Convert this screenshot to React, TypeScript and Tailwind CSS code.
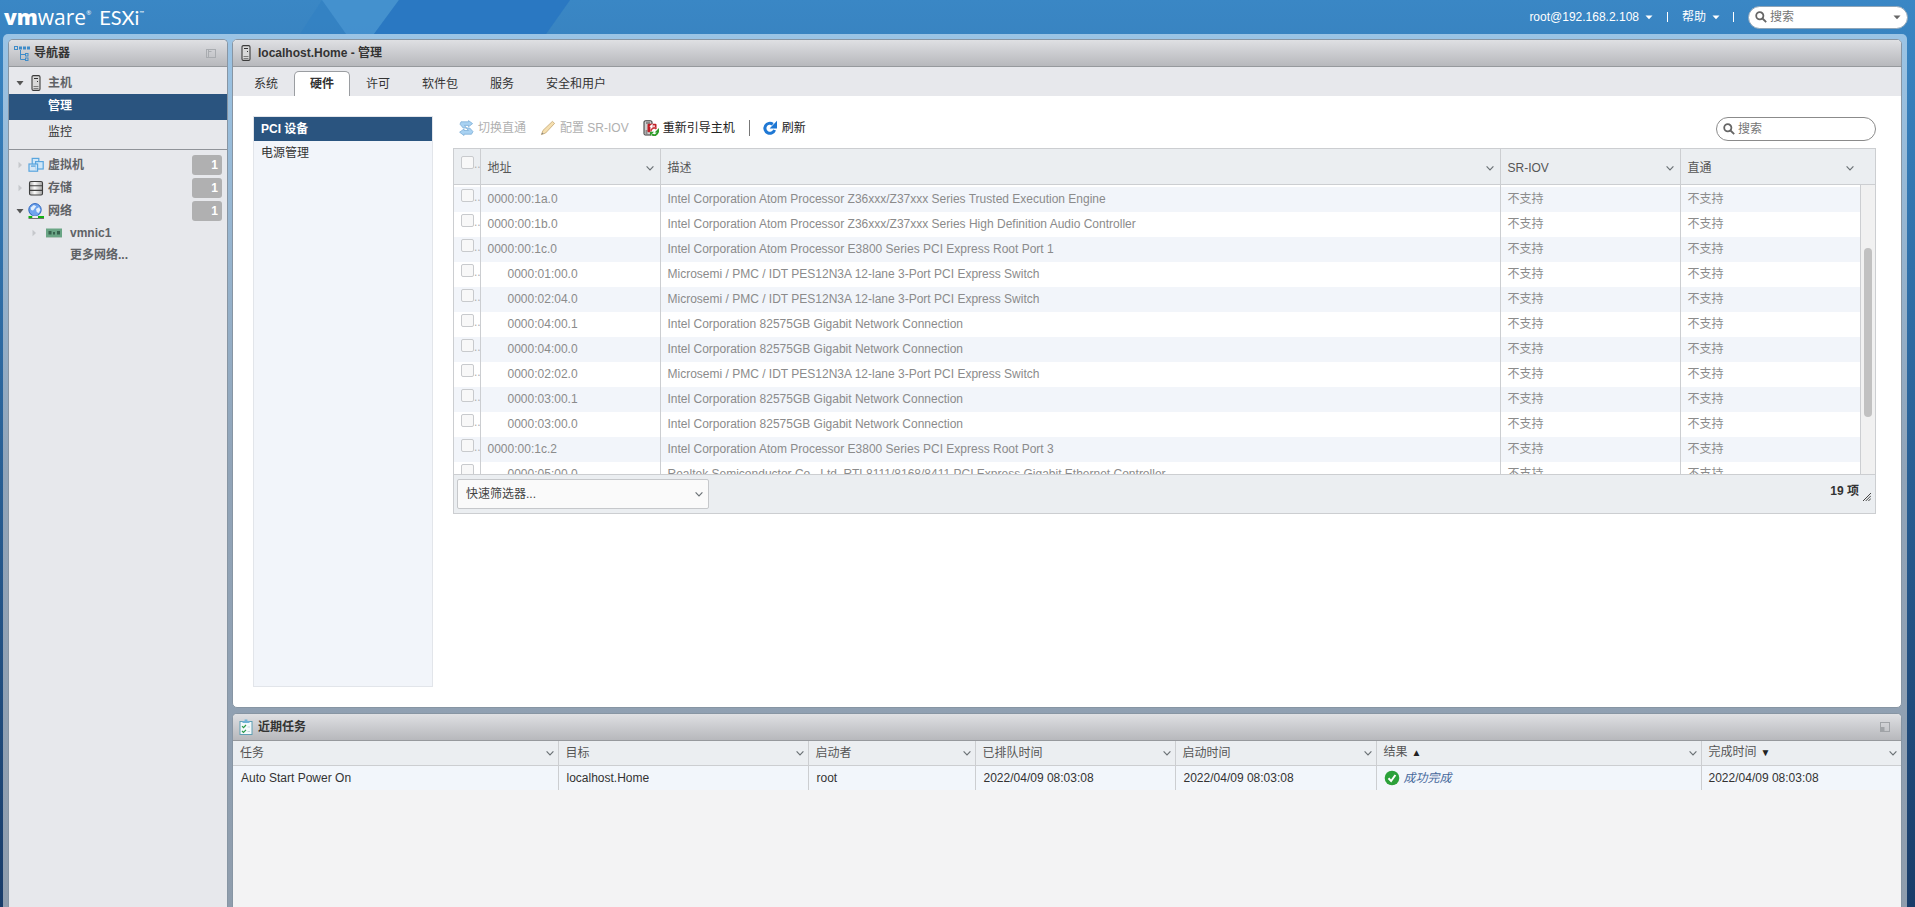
import type { ReactNode } from "react"

const devices = [
  { address: "0000:00:1a.0", level: 0, name: "Intel Corporation Atom Processor Z36xxx/Z37xxx Series Trusted Execution Engine" },
  { address: "0000:00:1b.0", level: 0, name: "Intel Corporation Atom Processor Z36xxx/Z37xxx Series High Definition Audio Controller" },
  { address: "0000:00:1c.0", level: 0, name: "Intel Corporation Atom Processor E3800 Series PCI Express Root Port 1" },
  { address: "0000:01:00.0", level: 1, name: "Microsemi / PMC / IDT PES12N3A 12-lane 3-Port PCI Express Switch" },
  { address: "0000:02:04.0", level: 1, name: "Microsemi / PMC / IDT PES12N3A 12-lane 3-Port PCI Express Switch" },
  { address: "0000:04:00.1", level: 1, name: "Intel Corporation 82575GB Gigabit Network Connection" },
  { address: "0000:04:00.0", level: 1, name: "Intel Corporation 82575GB Gigabit Network Connection" },
  { address: "0000:02:02.0", level: 1, name: "Microsemi / PMC / IDT PES12N3A 12-lane 3-Port PCI Express Switch" },
  { address: "0000:03:00.1", level: 1, name: "Intel Corporation 82575GB Gigabit Network Connection" },
  { address: "0000:03:00.0", level: 1, name: "Intel Corporation 82575GB Gigabit Network Connection" },
  { address: "0000:00:1c.2", level: 0, name: "Intel Corporation Atom Processor E3800 Series PCI Express Root Port 3" },
  { address: "0000:05:00.0", level: 1, name: "Realtek Semiconductor Co., Ltd. RTL8111/8168/8411 PCI Express Gigabit Ethernet Controller" },
]

const tabs = ["系统", "硬件", "许可", "软件包", "服务", "安全和用户"]

const taskColumns = [
  { label: "任务", sort: "", width: "w-[325px]" },
  { label: "目标", sort: "", width: "w-[250px]" },
  { label: "启动者", sort: "", width: "w-[167px]" },
  { label: "已排队时间", sort: "", width: "w-[200px]" },
  { label: "启动时间", sort: "", width: "w-[201px]" },
  { label: "结果", sort: "▲", width: "w-[325px]" },
  { label: "完成时间", sort: "▼", width: "" },
]

const Chevron = () => (
  <svg className="h-2 w-2 shrink-0" viewBox="0 0 8 8" fill="none" stroke="#6c7276" strokeWidth="1.2">
    <path d="M0.6 2.4L4 5.8l3.4-3.4" />
  </svg>
)

const Caret = ({ className = "text-white" }: { className?: string }) => (
  <svg className={`h-2 w-2 shrink-0 ${className}`} viewBox="0 0 8 8" fill="currentColor">
    <path d="M0.5 2.5h7L4 6.2z" />
  </svg>
)

const SearchIcon = () => (
  <svg className="h-3 w-3 shrink-0" viewBox="0 0 12 12" fill="none" stroke="#666" strokeWidth="1.8">
    <circle cx="4.8" cy="4.8" r="3.6" />
    <path d="M7.5 7.5l3.7 3.7" />
  </svg>
)

const HostIcon = () => (
  <svg className="h-4 w-4 shrink-0" viewBox="0 0 16 16">
    <rect x="4" y="0.6" width="8" height="14.8" rx="1.4" fill="#d9d9d9" stroke="#3c3c3c" strokeWidth="1.1" />
    <path d="M6 3.5h4" stroke="#333" />
    <path d="M9 6.5h1" stroke="#333" />
    <path d="M5.5 11.5h5M5.5 13.5h5" stroke="#666" strokeWidth="0.8" />
  </svg>
)

const NavigatorIcon = () => (
  <svg className="h-4 w-4 shrink-0" viewBox="0 0 16 16" fill="none" stroke="#3f8cc9">
    <rect x="0.5" y="1.5" width="3" height="3" />
    <rect x="5.5" y="2" width="2" height="2" />
    <rect x="9.5" y="2" width="2" height="2" />
    <rect x="13.5" y="2" width="2" height="2" />
    <path d="M6.5 5v9.5H11M6.5 9.5H11" />
    <rect x="11.5" y="8.5" width="2.5" height="2.5" />
    <rect x="11.5" y="13" width="2.5" height="2.5" />
  </svg>
)

const VmIcon = () => (
  <svg className="h-4 w-4 shrink-0" viewBox="0 0 16 16" fill="#cfe6f8" stroke="#59a5de" strokeWidth="1.2">
    <rect x="4.2" y="1.4" width="6.6" height="6.6" />
    <rect x="7.6" y="4.6" width="7.6" height="7.4" />
    <rect x="1" y="7" width="8.6" height="7.2" fillOpacity="0.75" />
    <path d="M3 9.2h4.4" />
  </svg>
)

const StorageIcon = () => (
  <svg className="h-4 w-4 shrink-0" viewBox="0 0 16 16">
    <defs>
      <linearGradient id="disk" x1="0" x2="1">
        <stop offset="0" stopColor="#a9a9a9" />
        <stop offset="0.4" stopColor="#fbfbfb" />
        <stop offset="1" stopColor="#a2a2a2" />
      </linearGradient>
    </defs>
    <rect x="1.5" y="1.5" width="13" height="13.5" rx="1.5" fill="url(#disk)" stroke="#3f3f3f" strokeWidth="1.1" />
    <path d="M1.5 5.8h13M1.5 10.4h13" stroke="#3f3f3f" strokeWidth="1.1" />
  </svg>
)

const NetworkIcon = () => (
  <svg className="h-4 w-4 shrink-0" viewBox="0 0 16 16">
    <circle cx="7" cy="6.8" r="6.2" fill="#6fa4ee" stroke="#2a63bd" />
    <path d="M2.6 4.8l3.2-2.8 2.4 1.2-1.6 2.2L5 7.4 3.2 7zM8 6l3-1.7 1.5 2.6-2 3.2L8.7 9z" fill="#e3effc" />
    <path d="M0.5 15.4H16" stroke="#2b2b2b" strokeWidth="0.7" />
    <path d="M0.5 14h4M10 14h6" stroke="#12b312" strokeWidth="2" />
    <rect x="4.5" y="12.8" width="5.5" height="2.2" fill="#eee" />
  </svg>
)

const NicIcon = () => (
  <svg className="h-4 w-4 shrink-0" viewBox="0 0 16 16">
    <rect x="0" y="3.5" width="16" height="9" fill="#6aa585" />
    <path d="M0 12.5h16" stroke="#b4c7bc" />
    <rect x="2.5" y="6" width="3" height="3.5" fill="#37634e" />
    <rect x="7" y="7" width="2" height="2.5" fill="#37634e" />
    <rect x="11" y="6" width="3" height="3.5" fill="#37634e" />
  </svg>
)

const SwapIcon = () => (
  <svg className="h-4 w-4 shrink-0" viewBox="0 0 16 16" fill="#a9d2f2" stroke="#7fb0d8" strokeWidth="0.8">
    <path d="M3 1.8H10.5V.6L14.6 3.6 10.5 6.8V5.4H6.5L8.5 8H5.2L2 4.2z" />
    <path d="M13.5 14.2H6v1.3L1.6 12.2 6 9v1.5h4.4L8.3 8h3.4L15 11.6z" />
  </svg>
)

const PencilIcon = () => (
  <svg className="h-4 w-4 shrink-0" viewBox="0 0 16 16">
    <path d="M1.4 14.6L3 10.4 12.4 1.4l2.2 2L5.6 13z" fill="#f5dfb0" stroke="#c9ae7b" strokeWidth="0.9" />
    <path d="M1.4 14.6l.8-2.2 1.5 1.4z" fill="#888" />
  </svg>
)

const RebootIcon = () => (
  <svg className="h-4 w-4 shrink-0" viewBox="0 0 16 16">
    <rect x="1" y="0.8" width="8" height="14.2" rx="1.2" fill="#d0d0d0" stroke="#333" />
    <path d="M3 3h4M2.5 11h2M2.5 13h2" stroke="#444" />
    <rect x="4.5" y="3.8" width="9" height="8.4" rx="1" fill="#c01e25" />
    <path d="M12 6.2H8M9.6 4.4L7.4 6.2l2.2 1.9M8 6.2v3.6" stroke="#fff" strokeWidth="1.2" fill="none" />
    <circle cx="11.2" cy="11.6" r="4.2" fill="#fff" />
    <path d="M7.8 11.4a3.4 3.4 0 015.6-2.5" fill="none" stroke="#c8373b" strokeWidth="1.6" />
    <path d="M14.7 11.8a3.4 3.4 0 01-5.7 2.4" fill="none" stroke="#2f9d2a" strokeWidth="2" />
    <path d="M16 8v4.4h-4.4z" fill="#2f9d2a" />
    <path d="M7 15.8v-4h4z" fill="#2f9d2a" />
  </svg>
)

const RefreshIcon = () => (
  <svg className="h-4 w-4 shrink-0" viewBox="0 0 16 16">
    <path d="M10.8 4.2A5 5 0 1012.6 10" fill="none" stroke="#1f78d4" strokeWidth="3" />
    <path d="M15 0.8v7.6H7.6z" fill="#1f78d4" />
  </svg>
)

const TaskIcon = () => (
  <svg className="h-4 w-4 shrink-0" viewBox="0 0 16 16">
    <rect x="2" y="2.5" width="12" height="13" fill="#f4fafc" stroke="#5f9fb3" />
    <path d="M4.5 4h7V2H9.4V0.4H6.6V2H4.5z" fill="#6fb2d6" />
    <path d="M4 7.2l1.5 1.5L8 6M4 12l1.5 1.5L8 10.8" fill="none" stroke="#2b9a4b" strokeWidth="1.2" />
    <path d="M9.5 8H12M9.5 12.5H12" stroke="#c3d6dd" />
  </svg>
)

const SuccessIcon = () => (
  <svg className="h-4 w-4 shrink-0" viewBox="0 0 16 16">
    <circle cx="8" cy="8" r="7.3" fill="#2ba13a" />
    <path d="M4.5 8.2l2.6 2.8 4.3-6" fill="none" stroke="#fff" strokeWidth="2" />
  </svg>
)

const MinimizeIcon = () => (
  <svg className="h-3 w-3" viewBox="0 0 12 12" fill="none" stroke="#a0a3a7">
    <rect x="1.5" y="1.5" width="9" height="9" />
    <rect x="2" y="6" width="3.5" height="4" fill="#a0a3a7" stroke="none" />
  </svg>
)

const CollapseIcon = () => (
  <svg className="h-3 w-3" viewBox="0 0 12 12" fill="none" stroke="#a9acb0">
    <rect x="1.5" y="2.5" width="9" height="8" />
    <path d="M3.5 3v7M4 4.5h2.5" />
  </svg>
)

const Arrow = ({ open }: { open: boolean }) => (
  <svg className="h-2 w-2 shrink-0" viewBox="0 0 8 8">
    {open ? <path d="M0.5 2h7L4 6.5z" fill="#555" /> : <path d="M2.5 0.8v6.4L6 4z" fill="#c6c8cc" />}
  </svg>
)

const Logo = () => (
  <div className="flex h-[34px] items-center gap-2 pl-1 text-white">
    <span className="flex items-start font-['Open_Sans',sans-serif] text-[21px] leading-6">
      <b className="font-extrabold">vm</b>ware
      <span className="text-[6px] leading-4">®</span>
    </span>
    <span className="flex items-start font-['Lato',sans-serif] text-[20px] leading-6">
      ESXi<span className="text-[6px] leading-4">™</span>
    </span>
  </div>
)

const PanelHeader = ({ icon, title, action }: { icon: ReactNode; title: string; action?: ReactNode }) => (
  <header className="flex h-[27px] shrink-0 items-center gap-1 border-b border-[#96999d] bg-linear-to-b from-[#dfe0e3] to-[#b7b8bc] pr-2.5 pl-[5px]">
    {icon}
    <h2 className="flex-1 font-bold text-[#333]">{title}</h2>
    {action}
  </header>
)

interface TreeItemProps {
  icon: ReactNode
  label: string
  open?: boolean
  count?: number
}

const TreeItem = ({ icon, label, open = false, count }: TreeItemProps) => (
  <li className="flex h-[23px] items-center pr-[5px] pl-[7px]">
    <button type="button" className="flex flex-1 items-center gap-1 text-left font-bold text-[#606266]">
      <Arrow open={open} />
      {icon}
      {label}
    </button>
    {count !== undefined && (
      <span className="h-5 w-[30px] rounded-[3px] bg-[#b0b0b1] pr-1 text-right leading-5 font-bold text-white">{count}</span>
    )}
  </li>
)

const Navigator = () => (
  <aside className="flex w-[220px] shrink-0 flex-col overflow-hidden rounded-t-[5px] border border-b-0 border-[#8795a3] bg-[#e7e8ec]">
    <PanelHeader
      icon={<NavigatorIcon />}
      title="导航器"
      action={<button type="button" aria-label="折叠"><CollapseIcon /></button>}
    />
    <nav>
      <ul className="border-b border-[#909399] pt-1 pb-1.5">
        <TreeItem icon={<HostIcon />} label="主机" open />
        <li>
          <a href="#manage" className="block h-[26px] bg-[#2a547f] pl-[39px] leading-6 font-bold text-white">管理</a>
        </li>
        <li>
          <a href="#monitor" className="block h-[23px] pl-[39px] leading-6 text-[#333]">监控</a>
        </li>
      </ul>
      <ul className="pt-[3px]">
        <TreeItem icon={<VmIcon />} label="虚拟机" count={1} />
        <TreeItem icon={<StorageIcon />} label="存储" count={1} />
        <TreeItem icon={<NetworkIcon />} label="网络" count={1} open />
      </ul>
      <ul className="pl-[13px]">
        <li className="flex h-[22px] items-center pl-2">
          <button type="button" className="flex items-center gap-2 font-bold text-[#606266]">
            <Arrow open={false} />
            <NicIcon />
            vmnic1
          </button>
        </li>
        <li className="h-[22px] pl-12 leading-[22px] font-bold">
          <a href="#networks" className="text-[#606266]">更多网络...</a>
        </li>
      </ul>
    </nav>
  </aside>
)

interface ToolButtonProps {
  icon: ReactNode
  label: string
  disabled?: boolean
}

const ToolButton = ({ icon, label, disabled }: ToolButtonProps) => (
  <button type="button" disabled={disabled} className="flex items-center gap-1 text-[#222] disabled:text-[#b0b0b0]">
    {icon}
    {label}
  </button>
)

const RowCheckbox = ({ label, disabled }: { label: string; disabled?: boolean }) => (
  <span className="flex h-5 items-start pl-[7px] text-[#b0b0b0]">
    <input
      type="checkbox"
      aria-label={label}
      disabled={disabled}
      className="h-[13px] w-[13px] shrink-0 appearance-none rounded-xs border border-[#c8cacd] bg-[#f8f8f8]"
    />
    <span className="leading-4">..</span>
  </span>
)

const DeviceGrid = () => (
  <div className="border border-[#ccced1]">
    <div className="flex h-[325px] flex-col overflow-hidden">
      <table className="w-full shrink-0 table-fixed border-collapse bg-[#ebeef1] text-left text-[#565656]">
        <colgroup>
          <col className="w-[26px]" />
          <col className="w-[180px]" />
          <col />
          <col className="w-[180px]" />
          <col className="w-[180px]" />
          <col className="w-[15px]" />
        </colgroup>
        <thead>
          <tr className="h-[35px] border-b border-[#ccced1]">
            <th className="overflow-hidden font-normal"><RowCheckbox label="全选" /></th>
            {["地址", "描述", "SR-IOV", "直通"].map(label => (
              <th key={label} className="border-l border-[#ccced1] pr-1.5 pl-[7px] font-normal">
                <span className="flex items-center justify-between pt-1">{label}<Chevron /></span>
              </th>
            ))}
            <th aria-label="滚动" />
          </tr>
        </thead>
      </table>
      <div className="flex min-h-0 flex-1">
        <table className="w-full flex-1 table-fixed border-collapse self-start text-[#8b8b8b]">
          <colgroup>
            <col className="w-[26px]" />
            <col className="w-[180px]" />
            <col />
            <col className="w-[180px]" />
            <col className="w-[180px]" />
          </colgroup>
          <tbody>
            <tr className="h-0.5">
              <td />
              <td className="border-l border-[#ccced1]" />
              <td className="border-l border-[#ccced1]" />
              <td className="border-l border-[#ccced1]" />
              <td className="border-l border-[#ccced1]" />
            </tr>
            {devices.map(d => (
              <tr key={d.address} className="h-[25px] even:bg-[#f2f5fa]">
                <td className="overflow-hidden p-0"><RowCheckbox label={d.address} disabled /></td>
                <td className={`border-l border-[#ccced1] ${d.level ? "pl-[27px]" : "pl-[7px]"}`}>{d.address}</td>
                <td className="truncate border-l border-[#ccced1] px-[7px]">{d.name}</td>
                <td className="border-l border-[#ccced1] px-[7px]">不支持</td>
                <td className="border-l border-[#ccced1] px-[7px]">不支持</td>
              </tr>
            ))}
          </tbody>
        </table>
        <div className="flex w-[15px] shrink-0 justify-center border-l border-[#ccced1] bg-[#f1f1f1] pt-[63px]">
          <div className="h-[169px] w-2 rounded-full bg-[#c1c1c1]" />
        </div>
      </div>
    </div>
    <footer className="flex h-[39px] items-center justify-between border-t border-[#ccced1] bg-[#ebeef1] pr-1 pl-[3px]">
      <div className="relative flex items-center">
        <select aria-label="快速筛选器" className="h-[30px] w-[252px] appearance-none rounded-xs border border-[#c6c8cb] bg-[#fafafa] px-2 text-[#444]">
          <option>快速筛选器...</option>
        </select>
        <span className="pointer-events-none absolute right-1.5"><Chevron /></span>
      </div>
      <div className="flex items-center gap-1 pb-1.5 font-bold text-[#333]">
        19 项
        <svg className="mt-3 h-2 w-2" viewBox="0 0 8 8" stroke="#444">
          <path d="M0 8L8 0M2.7 8L8 2.7M5.4 8L8 5.4" />
        </svg>
      </div>
    </footer>
  </div>
)

const HostPanel = () => (
  <section className="flex h-[669px] flex-col overflow-hidden rounded-[5px] border border-[#8795a3] bg-white">
    <PanelHeader icon={<HostIcon />} title="localhost.Home - 管理" />
    <div role="tablist" className="flex h-[29px] shrink-0 items-end bg-[#e7e8ec] pl-[5px]">
      {tabs.map(tab => (
        <button
          key={tab}
          type="button"
          role="tab"
          aria-selected={tab === "硬件"}
          className="h-[25px] border border-b-0 border-transparent px-[15px] text-[#333] aria-selected:rounded-t-[5px] aria-selected:border-[#9a9da1] aria-selected:bg-white aria-selected:font-bold"
        >
          {tab}
        </button>
      ))}
    </div>
    <div className="flex min-h-0 flex-1 gap-5 pt-5 pr-[25px] pb-5 pl-5">
      <ul className="w-[180px] shrink-0 border border-[#e2e5ea] bg-[#f2f5fa]">
        <li>
          <a href="#pci" className="block h-6 bg-[#2a547f] px-[7px] leading-6 font-bold text-white">PCI 设备</a>
        </li>
        <li>
          <a href="#power" className="block h-6 px-[7px] leading-6 text-[#333]">电源管理</a>
        </li>
      </ul>
      <div className="min-w-0 flex-1">
        <div className="flex h-8 items-start justify-between pl-[5px]">
          <div className="flex h-6 items-center gap-[14px]">
            <ToolButton icon={<SwapIcon />} label="切换直通" disabled />
            <ToolButton icon={<PencilIcon />} label="配置 SR-IOV" disabled />
            <ToolButton icon={<RebootIcon />} label="重新引导主机" />
            <div className="flex items-center gap-3">
              <span className="h-4 w-px bg-[#777]" />
              <ToolButton icon={<RefreshIcon />} label="刷新" />
            </div>
          </div>
          <label className="mt-px flex h-6 w-40 items-center gap-[3px] rounded-full border border-[#8b8b8b] bg-white px-1.5">
            <SearchIcon />
            <input aria-label="搜索设备" placeholder="搜索" className="min-w-0 flex-1 outline-none placeholder:text-[#757575]" />
          </label>
        </div>
        <DeviceGrid />
      </div>
    </div>
  </section>
)

const RecentTasks = () => (
  <section className="flex min-h-0 flex-1 flex-col overflow-hidden rounded-t-[5px] border border-b-0 border-[#8795a3] bg-[#f3f3f4]">
    <PanelHeader
      icon={<TaskIcon />}
      title="近期任务"
      action={<button type="button" aria-label="最小化"><MinimizeIcon /></button>}
    />
    <table className="w-full table-fixed border-collapse text-left text-[#333]">
      <colgroup>
        {taskColumns.map(c => <col key={c.label} className={c.width} />)}
      </colgroup>
      <thead>
        <tr className="h-6 border-b border-[#ccced1] bg-[#ebeef1] text-[#565656]">
          {taskColumns.map(c => (
            <th key={c.label} className="border-l border-[#ccced1] pr-1 pl-[7px] font-normal first:border-l-0">
              <span className="flex items-center justify-between">
                <span>{c.label}{c.sort && <span className="ml-1 text-[10px] text-[#222]">{c.sort}</span>}</span>
                <Chevron />
              </span>
            </th>
          ))}
        </tr>
      </thead>
      <tbody>
        <tr className="h-[25px] bg-[#f2f6fb]">
          <td className="px-2">Auto Start Power On</td>
          <td className="border-l border-[#ccced1] px-2">localhost.Home</td>
          <td className="border-l border-[#ccced1] px-2">root</td>
          <td className="border-l border-[#ccced1] px-2">2022/04/09 08:03:08</td>
          <td className="border-l border-[#ccced1] px-2">2022/04/09 08:03:08</td>
          <td className="border-l border-[#ccced1] px-[7px]">
            <span className="flex items-center gap-1 text-[#47699c] italic"><SuccessIcon />成功完成</span>
          </td>
          <td className="border-l border-[#ccced1] px-[7px]">2022/04/09 08:03:08</td>
        </tr>
      </tbody>
    </table>
  </section>
)

const TopBar = () => (
  <div className="relative flex h-[34px] shrink-0 items-center justify-between pr-[7px]">
    <svg className="absolute inset-0 h-[34px] w-[640px]" viewBox="0 0 640 34">
      <path d="M300 34L322 0H570L546 34z" fill="#2f7fc4" fillOpacity="0.45" />
      <path d="M322 0h77l-25 34H346z" fill="#4a95d2" fillOpacity="0.75" />
      <path d="M399 0H570L546 34H374z" fill="#2876c2" fillOpacity="0.8" />
    </svg>
    <div className="relative"><Logo /></div>
    <div className="relative flex items-center text-white">
      <button type="button" className="flex items-center gap-1.5">root@192.168.2.108 <Caret /></button>
      <span className="mx-[14px] h-2.5 w-px bg-white" />
      <button type="button" className="flex items-center gap-1.5">帮助 <Caret /></button>
      <span className="mr-[14px] ml-[13px] h-2.5 w-px bg-white" />
      <label className="flex h-[23px] w-40 items-center gap-[3px] rounded-full border border-[#8fa5b8] bg-white px-1.5">
        <SearchIcon />
        <input aria-label="搜索" placeholder="搜索" className="min-w-0 flex-1 text-[#333] outline-none placeholder:text-[#757575]" />
        <Caret className="text-[#666]" />
      </label>
    </div>
  </div>
)

const App = () => (
  <div className="flex h-screen flex-col overflow-hidden bg-linear-to-b from-[#3a87c5] to-[#193c69] font-['Liberation_Sans','Noto_Sans_CJK_SC',sans-serif] text-xs leading-4">
    <TopBar />
    <div className="mr-2 ml-[3px] flex min-h-0 flex-1 gap-1 rounded-t-[5px] bg-linear-to-b from-[#9bc4e5] via-[#91a4b8] to-[#8f9dad] px-[5px] pt-[5px]">
      <Navigator />
      <main className="flex min-w-0 flex-1 flex-col gap-[5px]">
        <HostPanel />
        <RecentTasks />
      </main>
    </div>
  </div>
)

export default App
